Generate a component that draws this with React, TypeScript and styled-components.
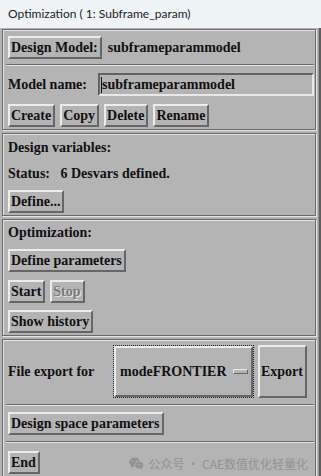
import React from "react";
import styled, { createGlobalStyle } from "styled-components";

const Global = createGlobalStyle`
  html, body { margin: 0; padding: 0; }
  *, *::before, *::after { box-sizing: border-box; }
  body { width: 321px; height: 476px; overflow: hidden; background: #b4b4b4; }
`;

const Page = styled.div`
  width: 321px;
  height: 476px;
  display: flex;
  flex-direction: column;
  background: #b4b4b4;
  font-family: "Liberation Serif", "Times New Roman", serif;
  font-weight: bold;
  font-size: 14px;
  color: #101010;
`;

const TitleBar = styled.div`
  height: 28px;
  flex: none;
  background: #eef3f6;
  display: flex;
  align-items: center;
  padding: 0 0 2px 8px;
  font-family: "Lato", "Noto Sans", sans-serif;
  font-weight: normal;
  font-size: 12px;
  color: #1c1c1c;
`;

const Body = styled.div`
  flex: 1;
  display: flex;
  flex-direction: column;
  gap: 3px;
  padding: 1px 3px 0 2px;
  border-right: 2px solid #5e5e5e;
  box-shadow: inset -1px 0 0 #9a9a9a;
  overflow: hidden;
`;

const Frame = styled.div<{ $grow?: boolean }>`
  border: 1px solid #6a6a6a;
  box-shadow: inset 1px 1px 0 #e4e4e4, 1px 1px 0 #e4e4e4;
  padding: 6px 1px 2px 5px;
  display: flex;
  flex-direction: column;
  flex: none;
  ${(p) => (p.$grow ? "flex: 1;" : "")}
`;

const Row = styled.div<{ $gap?: number; $mt?: number }>`
  display: flex;
  align-items: center;
  gap: ${(p) => p.$gap ?? 5}px;
  margin-top: ${(p) => p.$mt ?? 0}px;
`;

const Button = styled.button<{ $disabled?: boolean; $tall?: boolean }>`
  font: inherit;
  color: ${(p) => (p.$disabled ? "#7a7a7a" : "#101010")};
  background: #b4b4b4;
  height: ${(p) => (p.$tall ? 53 : 23)}px;
  padding: 0 2px 0 1px;
  margin: 0;
  border-style: solid;
  border-width: 2px;
  border-color: #ececec #666666 #666666 #ececec;
  display: flex;
  align-items: center;
  white-space: nowrap;
  cursor: default;
  ${(p) => (p.$disabled ? "text-shadow: 1px 1px 0 #e6e6e6;" : "")}
`;

const Label = styled.span<{ $w?: number }>`
  white-space: nowrap;
  ${(p) => (p.$w ? `width: ${p.$w}px; flex: none;` : "")}
`;

const TextLine = styled.div<{ $mt?: number }>`
  margin-top: ${(p) => p.$mt ?? 0}px;
  height: 16px;
  display: flex;
  align-items: center;
  white-space: nowrap;
`;

const Separator = styled.div<{ $mt: number }>`
  height: 2px;
  border-top: 1px solid #6a6a6a;
  border-bottom: 1px solid #e4e4e4;
  margin: ${(p) => p.$mt}px 0 0 -2px;
`;

const Field = styled.div`
  flex: 1;
  height: 23px;
  border-style: solid;
  border-width: 2px;
  border-color: #626262 #e8e8e8 #e8e8e8 #626262;
  display: flex;
  align-items: center;
  padding-left: 1px;
`;

const Caret = styled.span`
  width: 1px;
  height: 16px;
  background: #101010;
`;

const OptionFocus = styled.div`
  border: 1px dotted #202020;
  margin-left: 17px;
`;

const OptionButton = styled.div`
  width: 139px;
  height: 51px;
  border-style: solid;
  border-width: 2px;
  border-color: #ececec #666666 #666666 #ececec;
  display: flex;
  align-items: center;
  padding-left: 4px;
  gap: 6px;
`;

const Indicator = styled.span`
  width: 15px;
  height: 5px;
  border-style: solid;
  border-width: 1px;
  border-color: #ececec #666666 #666666 #ececec;
  background: #b4b4b4;
`;

const Footer = styled.div`
  display: flex;
  align-items: center;
  justify-content: space-between;
  margin-top: 8px;
`;

const Watermark = styled.div`
  display: flex;
  align-items: center;
  gap: 5px;
  font-family: "Noto Sans CJK SC", "Noto Sans", sans-serif;
  font-weight: normal;
  font-size: 12px;
  color: #929292;
  margin-right: 6px;
  margin-top: 1px;
`;

const WeChat = () => (
  <svg width="15" height="13" viewBox="0 0 17 14">
    <ellipse cx="6.5" cy="5.5" rx="6.2" ry="5.2" fill="#929292" />
    <path d="M2.5 9.5 L2 12 L5 10.5 Z" fill="#929292" />
    <ellipse cx="11.5" cy="9" rx="5" ry="4.2" fill="#929292" stroke="#b4b4b4" strokeWidth="1" />
    <path d="M14 12 L15 14 L12.5 12.8 Z" fill="#929292" />
    <circle cx="4.3" cy="4.2" r="0.9" fill="#b4b4b4" />
    <circle cx="8.5" cy="4.2" r="0.9" fill="#b4b4b4" />
    <circle cx="10" cy="8.3" r="0.7" fill="#b4b4b4" />
    <circle cx="13.2" cy="8.3" r="0.7" fill="#b4b4b4" />
  </svg>
);

export default function App() {
  return (
    <>
      <Global />
      <Page>
        <TitleBar>Optimization ( 1: Subframe_param)</TitleBar>
        <Body>
          <Frame>
            <Row $gap={6}>
              <Button>Design Model:</Button>
              <Label>subframeparammodel</Label>
            </Row>
            <Separator $mt={5} />
            <Row $gap={0} $mt={7}>
              <Label $w={90}>Model name:</Label>
              <Field>
                <Caret />
                subframeparammodel
              </Field>
            </Row>
            <Row $mt={8}>
              <Button>Create</Button>
              <Button>Copy</Button>
              <Button>Delete</Button>
              <Button>Rename</Button>
            </Row>
          </Frame>
          <Frame>
            <TextLine>Design variables:</TextLine>
            <TextLine $mt={10}>Status:&nbsp;&nbsp;&nbsp;6 Desvars defined.</TextLine>
            <Row $mt={8}>
              <Button>Define...</Button>
            </Row>
          </Frame>
          <Frame>
            <TextLine $mt={-1}>Optimization:</TextLine>
            <Row $mt={8}>
              <Button>Define parameters</Button>
            </Row>
            <Row $mt={8}>
              <Button>Start</Button>
              <Button $disabled>Stop</Button>
            </Row>
            <Row $mt={7}>
              <Button>Show history</Button>
            </Row>
          </Frame>
          <Frame $grow>
            <Row $gap={0} $mt={-1}>
              <Label $w={88}>File export for</Label>
              <OptionFocus>
                <OptionButton>
                  modeFRONTIER
                  <Indicator />
                </OptionButton>
              </OptionFocus>
              <Row $gap={0} style={{ marginLeft: 4 }}>
                <Button $tall>Export</Button>
              </Row>
            </Row>
            <Separator $mt={6} />
            <Row $mt={6}>
              <Button>Design space parameters</Button>
            </Row>
            <Separator $mt={6} />
            <Footer>
              <Button>End</Button>
              <Watermark>
                <WeChat />
                公众号 · CAE数值优化轻量化
              </Watermark>
            </Footer>
          </Frame>
        </Body>
      </Page>
    </>
  );
}
